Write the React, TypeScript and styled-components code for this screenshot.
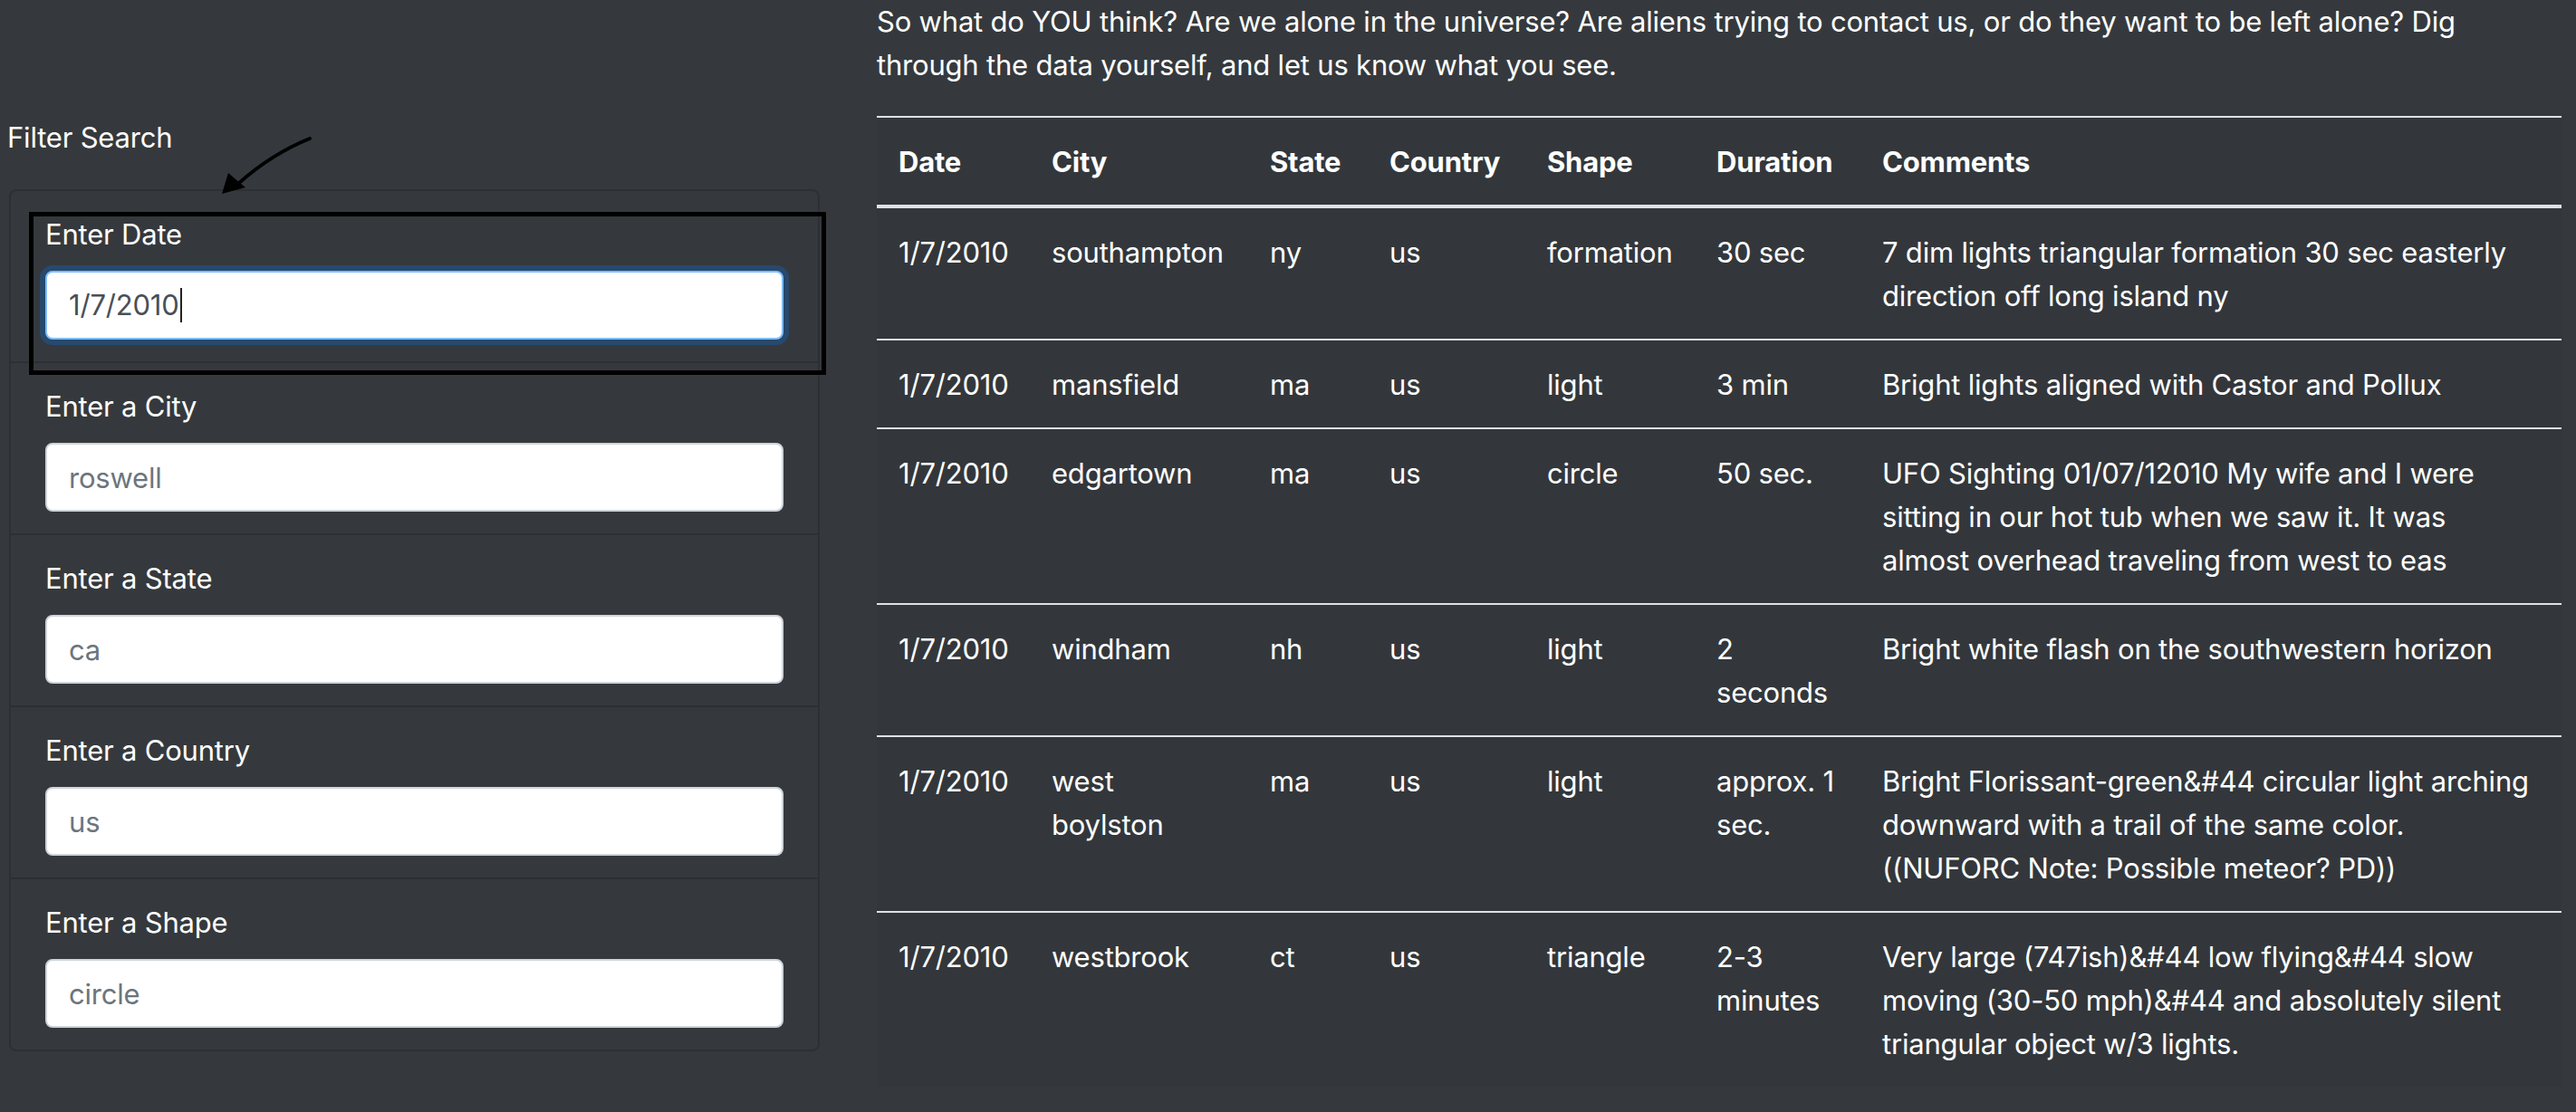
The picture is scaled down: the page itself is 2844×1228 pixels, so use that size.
import React from "react";
import styled, { createGlobalStyle } from "styled-components";

const GlobalStyle = createGlobalStyle`
  html, body {
    margin: 0;
    padding: 0;
    background: #35393d;
  }
  body {
    font-family: Inter, "Noto Sans", sans-serif;
    font-size: 31px;
    line-height: 48px;
    letter-spacing: -0.2px;
    color: #ffffff;
  }
  * { box-sizing: border-box; }
`;

const Page = styled.div`
  display: flex;
  align-items: flex-start;
  width: 2844px;
  height: 1228px;
  overflow: hidden;
`;

const Sidebar = styled.aside`
  position: relative;
  flex: none;
  width: 905px;
  padding: 128px 0 0 8px;
`;

const SidebarTitle = styled.div`
  margin-bottom: 33px;
`;

const Card = styled.div`
  margin-left: 2px;
  border: 2px solid #2c3034;
  border-radius: 8px;
`;

const FilterItem = styled.div`
  padding: 24px 38px;
  border-bottom: 2px solid #2c3034;
  &:last-child { border-bottom: none; }
`;

const Label = styled.label`
  display: block;
  margin-bottom: 16px;
`;

const TextInput = styled.input`
  display: block;
  width: 100%;
  height: 76px;
  padding: 12px 24px;
  font-family: inherit;
  font-size: 31px;
  line-height: 48px;
  letter-spacing: inherit;
  color: #495057;
  background: #ffffff;
  border: 2px solid #ced4da;
  border-radius: 8px;
  outline: none;
  &::placeholder { color: #6c757d; }
`;

const FocusedInput = styled.div`
  display: flex;
  align-items: center;
  width: 100%;
  height: 76px;
  padding: 12px 24px;
  font-size: 31px;
  color: #495057;
  background: #ffffff;
  border: 2px solid #80bdff;
  border-radius: 8px;
  box-shadow: 0 0 0 6px rgba(0, 123, 255, 0.25);
`;

const Caret = styled.span`
  display: inline-block;
  width: 2px;
  height: 38px;
  margin-left: 1px;
  background: #222;
`;

const Highlight = styled.div`
  position: absolute;
  left: 32px;
  top: 234px;
  width: 880px;
  height: 180px;
  border: 5px solid #000;
  pointer-events: none;
`;

const Arrow = styled.svg`
  position: absolute;
  left: 230px;
  top: 140px;
  width: 130px;
  height: 90px;
  overflow: visible;
`;

const Main = styled.main`
  flex: none;
  width: 1860px;
  margin-left: 63px;
`;

const Intro = styled.p`
  max-width: 1800px;
  margin: 0 0 32px;
`;

const Table = styled.table`
  width: 1860px;
  table-layout: fixed;
  border-collapse: collapse;
  background: #33373b;
  color: #ffffff;
`;

const Th = styled.th`
  padding: 25px 24px 23px;
  text-align: left;
  vertical-align: bottom;
  font-weight: 700;
  border-top: 2px solid #dee2e6;
  border-bottom: 4px solid #dee2e6;
`;

const Td = styled.td<{ $wrapInset?: boolean }>`
  padding: 25px ${(p) => (p.$wrapInset ? 32 : 24)}px 23px 24px;
  vertical-align: top;
  border-top: 2px solid #dee2e6;
`;

const columns = [
  { key: "date", title: "Date", width: 169 },
  { key: "city", title: "City", width: 241 },
  { key: "state", title: "State", width: 132 },
  { key: "country", title: "Country", width: 174 },
  { key: "shape", title: "Shape", width: 187 },
  { key: "duration", title: "Duration", width: 183 },
  { key: "comments", title: "Comments", width: 774 },
];

const rows = [
  ["1/7/2010", "southampton", "ny", "us", "formation", "30 sec", "7 dim lights triangular formation 30 sec easterly direction off long island ny"],
  ["1/7/2010", "mansfield", "ma", "us", "light", "3 min", "Bright lights aligned with Castor and Pollux"],
  ["1/7/2010", "edgartown", "ma", "us", "circle", "50 sec.", "UFO Sighting 01/07/12010 My wife and I were sitting in our hot tub when we saw it. It was almost overhead traveling from west to eas"],
  ["1/7/2010", "windham", "nh", "us", "light", "2 seconds", "Bright white flash on the southwestern horizon"],
  ["1/7/2010", "west boylston", "ma", "us", "light", "approx. 1 sec.", "Bright Florissant-green&#44 circular light arching downward with a trail of the same color. ((NUFORC Note: Possible meteor? PD))"],
  ["1/7/2010", "westbrook", "ct", "us", "triangle", "2-3 minutes", "Very large (747ish)&#44 low flying&#44 slow moving (30-50 mph)&#44 and absolutely silent triangular object w/3 lights."],
];

const filters = [
  { label: "Enter a City", placeholder: "roswell" },
  { label: "Enter a State", placeholder: "ca" },
  { label: "Enter a Country", placeholder: "us" },
  { label: "Enter a Shape", placeholder: "circle" },
];

export default function App() {
  return (
    <>
      <GlobalStyle />
      <Page>
        <Sidebar>
          <SidebarTitle>Filter Search</SidebarTitle>
          <Card>
            <FilterItem>
              <Label>Enter Date</Label>
              <FocusedInput role="textbox">
                1/7/2010
                <Caret />
              </FocusedInput>
            </FilterItem>
            {filters.map((f) => (
              <FilterItem key={f.label}>
                <Label>{f.label}</Label>
                <TextInput type="text" placeholder={f.placeholder} />
              </FilterItem>
            ))}
          </Card>
          <Highlight />
          <Arrow viewBox="0 0 130 90">
            <path d="M112 13 Q 70 30 34 62" fill="none" stroke="#000" strokeWidth="4" strokeLinecap="round" />
            <polygon points="15,74 22,51 41,67" fill="#000" />
          </Arrow>
        </Sidebar>
        <Main>
          <Intro>
            So what do YOU think? Are we alone in the universe? Are aliens trying to contact us, or do they want to be left alone? Dig through the data yourself, and let us know what you see.
          </Intro>
          <Table>
            <colgroup>
              {columns.map((c) => (
                <col key={c.key} style={{ width: c.width }} />
              ))}
            </colgroup>
            <thead>
              <tr>
                {columns.map((c) => (
                  <Th key={c.key}>{c.title}</Th>
                ))}
              </tr>
            </thead>
            <tbody>
              {rows.map((r, i) => (
                <tr key={i}>
                  {r.map((cell, j) => (
                    <Td key={j} $wrapInset={j === r.length - 1}>
                      {cell}
                    </Td>
                  ))}
                </tr>
              ))}
            </tbody>
          </Table>
        </Main>
      </Page>
    </>
  );
}
